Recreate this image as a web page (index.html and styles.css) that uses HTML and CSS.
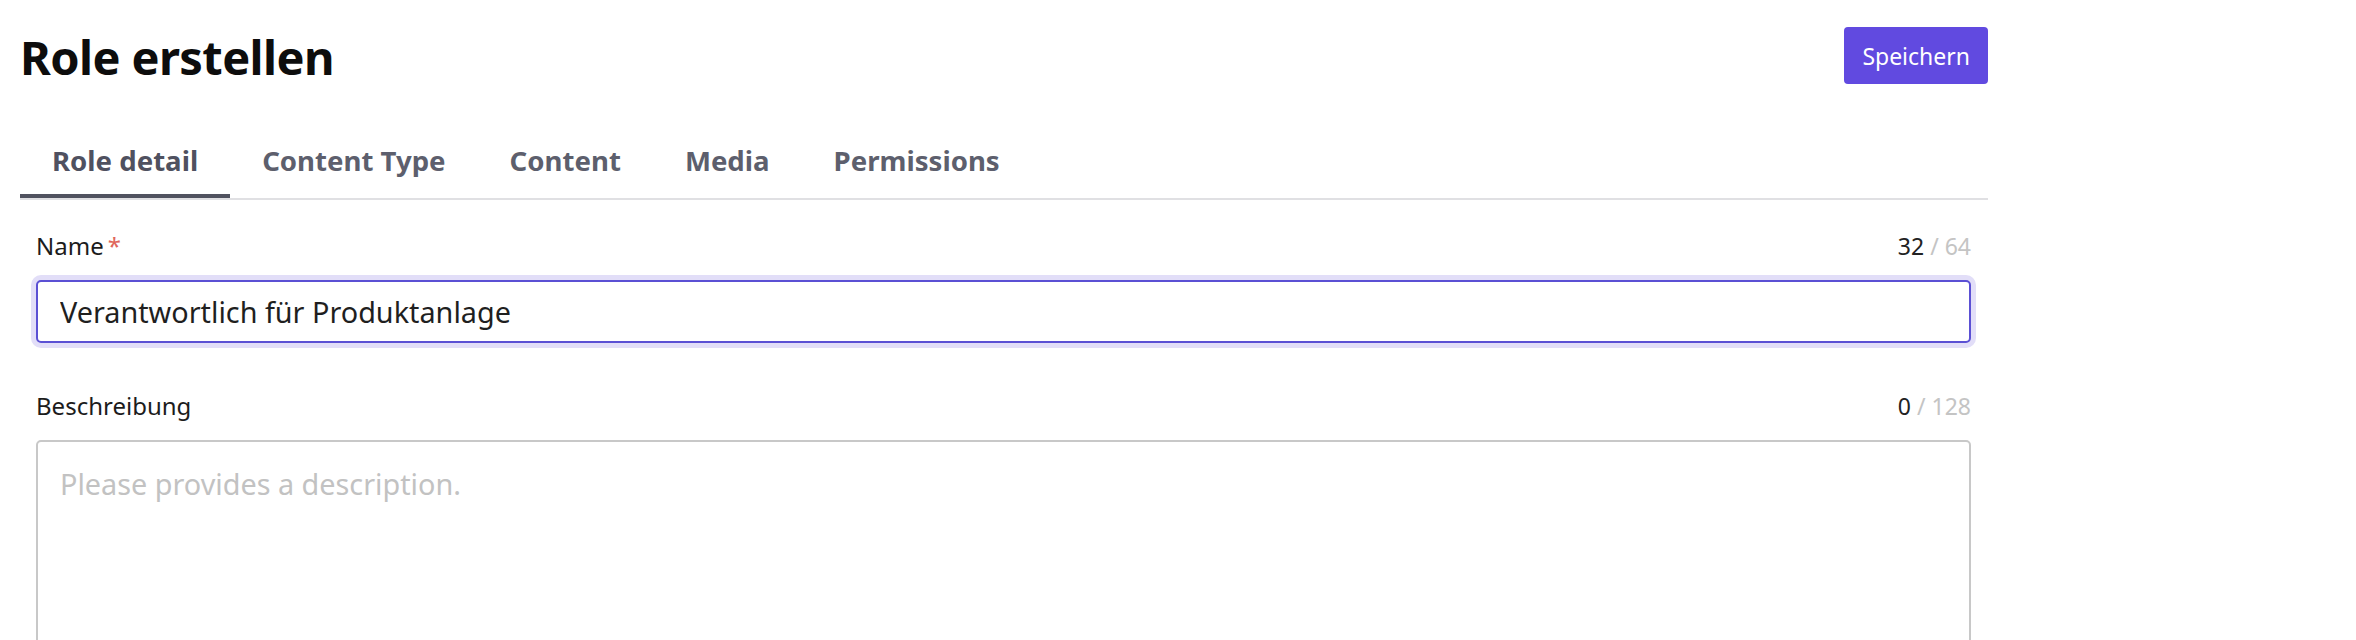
FILE: index.html
```html
<!DOCTYPE html>
<html lang="de">
<head>
    <meta charset="UTF-8">
    <meta name="viewport" content="width=device-width, initial-scale=1.0">
    <title>Role erstellen</title>
    <link rel="stylesheet" href="styles.css">
</head>
<body>
    <div class="page">
        <div class="page-header">
            <h1>Role erstellen</h1>
            <button class="btn-primary" type="button">Speichern</button>
        </div>

        <div class="tabs">
            <div class="tab active">Role detail</div>
            <div class="tab">Content Type</div>
            <div class="tab">Content</div>
            <div class="tab">Media</div>
            <div class="tab">Permissions</div>
        </div>

        <form class="role-form">
            <div class="field">
                <div class="field-head">
                    <label for="name">Name<span class="required">*</span></label>
                    <span class="counter"><span class="count">32</span> / 64</span>
                </div>
                <input id="name" class="text-input focused" type="text" value="Verantwortlich für Produktanlage">
            </div>

            <div class="field">
                <div class="field-head">
                    <label for="description">Beschreibung</label>
                    <span class="counter"><span class="count">0</span> / 128</span>
                </div>
                <textarea id="description" class="text-area" placeholder="Please provides a description."></textarea>
            </div>
        </form>
    </div>
</body>
</html>
```

FILE: styles.css
```css
/* Reset */
* {
    margin: 0;
    padding: 0;
    box-sizing: border-box;
}

body {
    font-family: 'Noto Sans', 'Open Sans', Arial, sans-serif;
    background: #fff;
    color: #1f1f1f;
    overflow: hidden;
}

.page {
    width: 1968px;
    margin-left: 20px;
}

/* Kopfzeile */
.page-header {
    display: flex;
    justify-content: space-between;
    align-items: flex-start;
    padding-top: 27px;
}

.page-header h1 {
    font-size: 47px;
    font-weight: 700;
    line-height: 57px;
    letter-spacing: -0.6px;
    color: #0d0d0d;
    margin-top: 2px;
}

.btn-primary {
    height: 57px;
    padding: 0 18px;
    border: none;
    border-radius: 4px;
    background: #614ae0;
    color: #fff;
    font-family: inherit;
    font-size: 23px;
    cursor: pointer;
}

/* Tabs */
.tabs {
    display: flex;
    margin-top: 42px;
    border-bottom: 2px solid #e0e0e3;
}

.tab {
    padding: 12px 32px 14px;
    font-size: 27.6px;
    font-weight: 700;
    line-height: 40px;
    color: #5d5f6d;
    border-bottom: 4px solid transparent;
    cursor: pointer;
}

.tab.active {
    color: #4f5160;
    border-bottom-color: #50525f;
}

/* Formular */
.role-form {
    padding: 30px 17px 0 16px;
    display: flex;
    flex-direction: column;
    gap: 47px;
}

.field-head {
    display: flex;
    justify-content: space-between;
    align-items: baseline;
    line-height: 32px;
    margin-bottom: 18px;
}

.field-head label {
    font-size: 24px;
    color: #1c1c1c;
}

.required {
    color: #e0665b;
    margin-left: 4px;
}

.counter {
    font-size: 23px;
    color: #c4c4c4;
}

.counter .count {
    color: #222;
}

.text-input,
.text-area {
    display: block;
    width: 100%;
    font-family: inherit;
    font-size: 28.8px;
    color: #1f1f1f;
    border-radius: 5px;
    outline: none;
    background: #fff;
}

.text-input {
    height: 63px;
    padding: 0 22px;
    border: 2px solid #5b50d4;
}

.text-input.focused {
    box-shadow: 0 0 0 5px #e2def8;
}

.text-area {
    height: 260px;
    padding: 23px 22px;
    line-height: 38px;
    border: 2px solid #c8c8c8;
    resize: none;
}

.text-area::placeholder {
    color: #c2c2c2;
}
```
